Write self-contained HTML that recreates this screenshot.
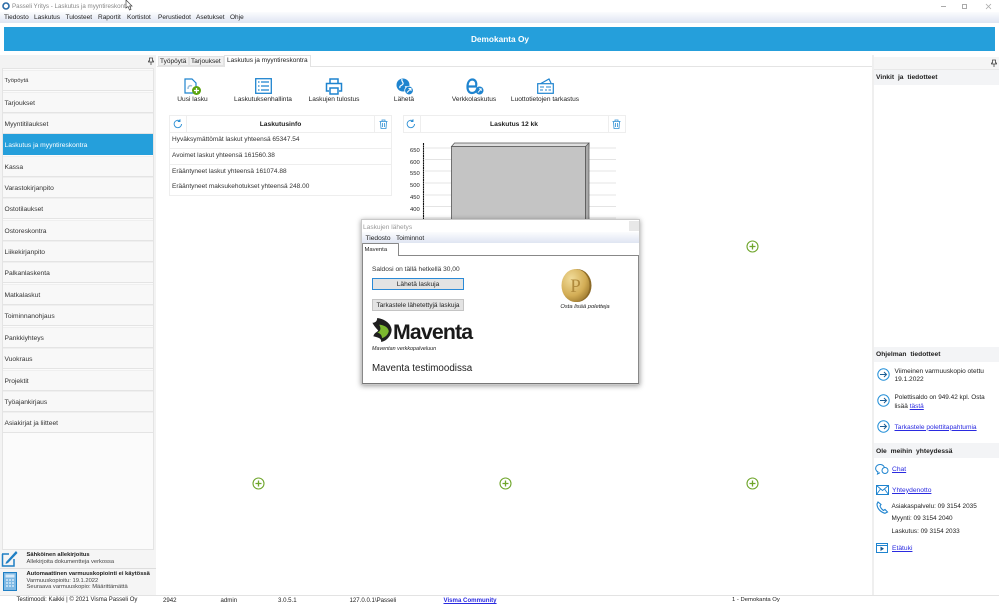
<!DOCTYPE html>
<html><head><meta charset="utf-8">
<style>
*{box-sizing:border-box}
html,body{margin:0;padding:0;width:999px;height:604px;overflow:hidden;background:#fff}
body{font-family:"Liberation Sans",sans-serif;font-size:6.6px;color:#222;position:relative}
#r{position:absolute;left:0;top:0;width:999px;height:604px;filter:blur(.35px)}
.a{position:absolute}
.t{position:absolute;white-space:nowrap;line-height:9px}
.c{transform:translateX(-50%)}
.n{position:absolute;left:3px;width:150px;height:21.300px;background:#f8f8f8;border-bottom:1px solid #e4e4e4;border-top:1px solid #efefef;line-height:21px;padding-left:1.500px;font-size:6.700px;color:#333}
a{color:#2a2ae0;text-decoration:underline}
svg{position:absolute;overflow:visible}
.b{font-weight:bold}
.row{position:absolute;left:169px;width:223px;height:16px;background:#fff;border:1px solid #eee;border-top:none;line-height:13px;padding-left:2px;font-size:6.500px;color:#333}
</style></head><body><div id="r">

<!-- title + menu -->
<svg style="left:2px;top:2px" width="8" height="8" viewBox="0 0 8 8"><circle cx="4" cy="4" r="3" fill="none" stroke="#2a6ca8" stroke-width="1.6"/></svg>
<div class="t" style="left:12px;top:1.500px;color:#888;font-size:6.200px">Passeli Yritys - Laskutus ja myyntireskontra</div>
<svg style="left:125px;top:0" width="8" height="11" viewBox="0 0 8 11"><path d="M1 0V8L3 6.500 4.500 10 6 9.300 4.600 6H7Z" fill="#fff" stroke="#444" stroke-width=".7"/></svg>
<div class="a" style="left:0;top:12px;width:999px;height:11px;background:linear-gradient(#fbfcfe,#dfe5f2)"></div>
<div class="t" style="left:4px;top:13px;font-size:6.500px">Tiedosto</div>
<div class="t" style="left:34px;top:13px;font-size:6.500px">Laskutus</div>
<div class="t" style="left:65.500px;top:13px;font-size:6.500px">Tulosteet</div>
<div class="t" style="left:98px;top:13px;font-size:6.500px">Raportit</div>
<div class="t" style="left:127px;top:13px;font-size:6.500px">Kortistot</div>
<div class="t" style="left:158px;top:13px;font-size:6.500px">Perustiedot</div>
<div class="t" style="left:196px;top:13px;font-size:6.500px">Asetukset</div>
<div class="t" style="left:230px;top:13px;font-size:6.500px">Ohje</div>
<div class="a" style="left:941px;top:5.500px;width:5px;height:1px;background:#aaa"></div>
<div class="a" style="left:962px;top:4px;width:5px;height:5px;border:1px solid #aaa"></div>
<svg style="left:985px;top:3px" width="7" height="7" viewBox="0 0 7 7"><path d="M1 1 6 6M6 1 1 6" stroke="#aaa" stroke-width=".8"/></svg>

<!-- banner -->
<div class="a" style="left:4px;top:27px;width:991px;height:24px;background:#259fdb"></div>
<div class="t c b" style="left:500px;top:34px;color:#fff;font-size:8.300px;line-height:10px">Demokanta Oy</div>

<!-- left panel -->
<div class="a" style="left:0;top:55px;width:156px;height:540px;background:#f3f3f3"></div>
<div class="a" style="left:2px;top:68px;width:152px;height:482px;background:#fbfbfb;border:1px solid #e4e4e4"></div>
<svg style="left:148px;top:57px" width="6" height="8" viewBox="0 0 6 8"><path d="M1.500 1H4.500V4H5.500V5H.5V4H1.500ZM3 5V8" fill="none" stroke="#444" stroke-width=".8"/></svg>
<div class="n" style="top:70px;font-size:5.900px">Työpöytä</div>
<div class="n" style="top:91.500px">Tarjoukset</div>
<div class="n" style="top:113px">Myyntitilaukset</div>
<div class="n" style="top:134px;background:#259fdb;border-color:#259fdb;color:#fff">Laskutus ja myyntireskontra</div>
<div class="n" style="top:155.500px">Kassa</div>
<div class="n" style="top:177px">Varastokirjanpito</div>
<div class="n" style="top:198px">Ostotilaukset</div>
<div class="n" style="top:219.500px">Ostoreskontra</div>
<div class="n" style="top:241px">Liikekirjanpito</div>
<div class="n" style="top:262px">Palkanlaskenta</div>
<div class="n" style="top:284px">Matkalaskut</div>
<div class="n" style="top:305px">Toiminnanohjaus</div>
<div class="n" style="top:326.500px">Pankkiyhteys</div>
<div class="n" style="top:348px">Vuokraus</div>
<div class="n" style="top:369.500px">Projektit</div>
<div class="n" style="top:391px">Työajankirjaus</div>
<div class="n" style="top:412px">Asiakirjat ja liitteet</div>

<!-- left bottom -->
<div class="a" style="left:0;top:550px;width:156px;height:19px;background:#f5f5f5;border-bottom:1px solid #ddd"></div>
<div class="a" style="left:0;top:569px;width:156px;height:26px;background:#f5f5f5"></div>
<svg style="left:1px;top:550px" width="17" height="17" viewBox="0 0 17 17"><path d="M1 4H8M1.500 4V16H13V9" fill="none" stroke="#1f7fc4" stroke-width="1.500"/><path d="M5 12 15 1 16.500 3 7 13 4.500 14Z" fill="#1f7fc4"/></svg>
<svg style="left:3px;top:572px" width="14" height="19" viewBox="0 0 14 19"><rect x=".5" y=".5" width="13" height="18" fill="#7fb9e4" stroke="#1f7fc4"/><rect x="2.500" y="2.500" width="9" height="3" fill="#d6eafa"/><path d="M3 8H11M3 11H11M3 14H11" stroke="#d6eafa" stroke-width="1.500" stroke-dasharray="2 1"/></svg>
<div class="t b" style="left:26.500px;top:550.500px;font-size:5.800px">Sähköinen allekirjoitus</div>
<div class="t" style="left:26.500px;top:557.500px;font-size:5.800px;color:#444">Allekirjoita dokumentteja verkossa</div>
<div class="t b" style="left:26.500px;top:570px;font-size:5.800px">Automaattinen varmuuskopiointi ei käytössä</div>
<div class="t" style="left:26.500px;top:577px;font-size:5.800px;color:#444">Varmuuskopioitu: 19.1.2022</div>
<div class="t" style="left:26.500px;top:583px;font-size:5.800px;color:#444">Seuraava varmuuskopio: Määrittämättä</div>

<!-- tabs -->
<div class="a" style="left:157px;top:66px;width:715px;height:1px;background:#e4e4e4"></div>
<div class="a" style="left:158px;top:56px;width:31px;height:10px;background:#f0f0f0;border:1px solid #e2e2e2"></div>
<div class="a" style="left:189px;top:56px;width:35px;height:10px;background:#f0f0f0;border:1px solid #e2e2e2"></div>
<div class="a" style="left:224px;top:55px;width:87px;height:12px;background:#fff;border:1px solid #e2e2e2;border-bottom:none"></div>
<div class="t" style="left:160px;top:57px;font-size:6.500px">Työpöytä</div>
<div class="t" style="left:191px;top:57px;font-size:6.500px">Tarjoukset</div>
<div class="t" style="left:227px;top:56px;font-size:6.500px">Laskutus ja myyntireskontra</div>

<!-- toolbar icons -->
<svg style="left:184px;top:78px" width="18" height="18" viewBox="0 0 18 18"><path d="M1 1H8L12 5V15H1Z" fill="#fff" stroke="#1f84cf" stroke-width="1.200"/><path d="M4 11C4 8 6 7 8 8" fill="none" stroke="#9bbfdc" stroke-width="1.500"/><circle cx="12.500" cy="12.500" r="4.500" fill="#5ba40f"/><path d="M10 12.500H15M12.500 10V15" stroke="#fff" stroke-width="1.300"/></svg>
<svg style="left:255px;top:78px" width="17" height="16" viewBox="0 0 17 16"><rect x=".7" y=".7" width="15.600" height="14.600" fill="#fff" stroke="#1f84cf" stroke-width="1.300"/><path d="M3 4H4.500M6 4H14M3 8H4.500M6 8H14M3 12H4.500M6 12H14" stroke="#1f84cf" stroke-width="1.300"/></svg>
<svg style="left:325px;top:78px" width="18" height="17" viewBox="0 0 18 17"><path d="M5 5V1H13V5M4 13H1.500V5.500H16.500V13H14" fill="none" stroke="#1f84cf" stroke-width="1.500"/><path d="M5 10H13V16H5Z" fill="#fff" stroke="#1f84cf" stroke-width="1.500"/></svg>
<svg style="left:396px;top:78px" width="18" height="17" viewBox="0 0 18 17"><circle cx="7" cy="7" r="6.500" fill="#1f84cf"/><path d="M6 1C5 4 8 4 7 6S3 7 4 10M9 9C11 8 12 10 11 12" stroke="#fff" stroke-width="1.200" fill="none"/><circle cx="13" cy="12.500" r="4.300" fill="#1f84cf" stroke="#fff" stroke-width=".7"/><path d="M11 14.500 15 10.500M12.500 10.500H15V13" stroke="#fff" stroke-width="1" fill="none"/></svg>
<svg style="left:466px;top:78px" width="18" height="17" viewBox="0 0 18 17"><path d="M2 8.500H10C11 4 9 1.500 6.500 1.500 3 1.500 1.500 5 1.500 9 1.500 13 3.500 15 6 15 8 15 9.500 14 10.500 12.500" fill="none" stroke="#1f84cf" stroke-width="2.200"/><circle cx="13.500" cy="12.500" r="4" fill="#1f84cf"/><path d="M12 14.500 15 11M13 10.800H15.200V13" stroke="#fff" stroke-width=".9" fill="none"/></svg>
<svg style="left:537px;top:78px" width="17" height="16" viewBox="0 0 17 16"><path d="M3 6 12 1 14 5" fill="none" stroke="#1f84cf" stroke-width="1.200"/><rect x=".7" y="5.700" width="15.600" height="9.600" fill="#fff" stroke="#1f84cf" stroke-width="1.200"/><path d="M3 9H7M9 9H14M3 12H6M8 12H10M11.500 12H14" stroke="#1f84cf" stroke-width="1"/></svg>
<div class="t c" style="left:192.500px;top:95px;font-size:6.600px">Uusi lasku</div>
<div class="t c" style="left:263px;top:95px;font-size:6.600px">Laskutuksenhallinta</div>
<div class="t c" style="left:334px;top:95px;font-size:6.600px">Laskujen tulostus</div>
<div class="t c" style="left:404px;top:95px;font-size:6.600px">Lähetä</div>
<div class="t c" style="left:474px;top:95px;font-size:6.600px">Verkkolaskutus</div>
<div class="t c" style="left:545px;top:95px;font-size:6.600px">Luottotietojen tarkastus</div>

<!-- Laskutusinfo widget -->
<div class="a" style="left:169px;top:115px;width:223px;height:18px;border:1px solid #eee;background:#fff"></div>
<div class="a" style="left:186px;top:115px;width:1px;height:18px;background:#eee"></div>
<div class="a" style="left:374px;top:115px;width:1px;height:18px;background:#eee"></div>
<svg style="left:173px;top:119px" width="10" height="10" viewBox="0 0 10 10"><path d="M8.500 5A3.700 3.700 0 1 1 7 2M7 .3V2.500H4.800" fill="none" stroke="#2c8fd4" stroke-width=".9"/></svg>
<svg style="left:379px;top:119px" width="9" height="10" viewBox="0 0 9 10"><path d="M.5 2.500H8.500M3 2.500V1H6V2.500M1.500 2.500 2 9.500H7L7.500 2.500M3.500 4V8M5.500 4V8" fill="none" stroke="#2c8fd4" stroke-width=".8"/></svg>
<div class="t c b" style="left:280.500px;top:119.500px;font-size:6.700px">Laskutusinfo</div>
<div class="row" style="top:133px">Hyväksymättömät laskut yhteensä 65347.54</div>
<div class="row" style="top:149px">Avoimet laskut yhteensä 161560.38</div>
<div class="row" style="top:165px">Erääntyneet laskut yhteensä 161074.88</div>
<div class="row" style="top:180px">Erääntyneet maksukehotukset yhteensä 248.00</div>

<!-- chart widget -->
<div class="a" style="left:403px;top:115px;width:223px;height:18px;border:1px solid #eee;background:#fff"></div>
<div class="a" style="left:420px;top:115px;width:1px;height:18px;background:#eee"></div>
<div class="a" style="left:608px;top:115px;width:1px;height:18px;background:#eee"></div>
<svg style="left:406px;top:119px" width="10" height="10" viewBox="0 0 10 10"><path d="M8.500 5A3.700 3.700 0 1 1 7 2M7 .3V2.500H4.800" fill="none" stroke="#2c8fd4" stroke-width=".9"/></svg>
<svg style="left:612px;top:119px" width="9" height="10" viewBox="0 0 9 10"><path d="M.5 2.500H8.500M3 2.500V1H6V2.500M1.500 2.500 2 9.500H7L7.500 2.500M3.500 4V8M5.500 4V8" fill="none" stroke="#2c8fd4" stroke-width=".8"/></svg>
<div class="t c b" style="left:514px;top:119.500px;font-size:6.700px">Laskutus 12 kk</div>

<svg style="left:405px;top:140px" width="215" height="82" viewBox="0 0 215 82">
<path d="M20 8H211M20 19.500H211M20 31H211M20 43H211M20 55H211M20 66.500H211M20 78H211" stroke="#e4e4e4" stroke-width="1"/>
<path d="M18.500 3V82" stroke="#111" stroke-width="1.100" stroke-dasharray="2 .4"/>
<path d="M46.500 6.500 49.500 3H184V6.500L181 7Z" fill="#dedede" stroke="#555" stroke-width=".7"/>
<path d="M180.500 6.500 184 3V82H180.500Z" fill="#a9a9a9" stroke="#555" stroke-width=".7"/>
<rect x="46.500" y="6.500" width="134" height="76" fill="#c4c4c4" stroke="#555" stroke-width=".8"/>
</svg>
<div class="t" style="left:410px;top:147px;font-size:5.800px">650</div>
<div class="t" style="left:410px;top:158.500px;font-size:5.800px">600</div>
<div class="t" style="left:410px;top:170px;font-size:5.800px">550</div>
<div class="t" style="left:410px;top:182px;font-size:5.800px">500</div>
<div class="t" style="left:410px;top:193.500px;font-size:5.800px">450</div>
<div class="t" style="left:410px;top:205.500px;font-size:5.800px">400</div>

<!-- plus buttons -->
<svg style="left:746px;top:240px" width="13" height="13" viewBox="0 0 13 13"><circle cx="6.500" cy="6.500" r="5.500" fill="#fff" stroke="#6ea52a" stroke-width="1.100"/><path d="M3.500 6.500H9.500M6.500 3.500V9.500" stroke="#6ea52a" stroke-width="1.300"/></svg>
<svg style="left:252px;top:477px" width="13" height="13" viewBox="0 0 13 13"><circle cx="6.500" cy="6.500" r="5.500" fill="#fff" stroke="#6ea52a" stroke-width="1.100"/><path d="M3.500 6.500H9.500M6.500 3.500V9.500" stroke="#6ea52a" stroke-width="1.300"/></svg>
<svg style="left:499px;top:477px" width="13" height="13" viewBox="0 0 13 13"><circle cx="6.500" cy="6.500" r="5.500" fill="#fff" stroke="#6ea52a" stroke-width="1.100"/><path d="M3.500 6.500H9.500M6.500 3.500V9.500" stroke="#6ea52a" stroke-width="1.300"/></svg>
<svg style="left:746px;top:477px" width="13" height="13" viewBox="0 0 13 13"><circle cx="6.500" cy="6.500" r="5.500" fill="#fff" stroke="#6ea52a" stroke-width="1.100"/><path d="M3.500 6.500H9.500M6.500 3.500V9.500" stroke="#6ea52a" stroke-width="1.300"/></svg>

<!-- right panel -->
<div class="a" style="left:872px;top:55px;width:127px;height:540px;background:#fff;border-left:2px solid #efefef"></div>
<div class="a" style="left:874px;top:57px;width:125px;height:12px;background:#f5f5f5"></div>
<svg style="left:991px;top:59px" width="6" height="8" viewBox="0 0 6 8"><path d="M1.500 1H4.500V4H5.500V5H.5V4H1.500ZM3 5V8" fill="none" stroke="#444" stroke-width=".8"/></svg>
<div class="a" style="left:874px;top:69px;width:125px;height:16px;background:#f3f4f6;border-top:1px solid #e8e8e8"></div>
<div class="t b" style="left:876px;top:72.500px;font-size:6.700px;word-spacing:2px">Vinkit ja tiedotteet</div>

<div class="a" style="left:874px;top:347px;width:125px;height:15px;background:#f3f4f6"></div>
<div class="t b" style="left:876px;top:349.500px;font-size:6.700px;word-spacing:2px">Ohjelman tiedotteet</div>
<svg style="left:877px;top:368px" width="13" height="13" viewBox="0 0 13 13"><circle cx="6.500" cy="6.500" r="5.700" fill="#fff" stroke="#2590d8" stroke-width="1"/><path d="M3 6.500H9.500M7 4 9.500 6.500 7 9" fill="none" stroke="#1c5f96" stroke-width="1"/></svg>
<div class="t" style="left:894.500px;top:367px;font-size:6.550px">Viimeinen varmuuskopio otettu</div>
<div class="t" style="left:894.500px;top:374.500px;font-size:6.550px">19.1.2022</div>
<svg style="left:877px;top:394px" width="13" height="13" viewBox="0 0 13 13"><circle cx="6.500" cy="6.500" r="5.700" fill="#fff" stroke="#2590d8" stroke-width="1"/><path d="M3 6.500H9.500M7 4 9.500 6.500 7 9" fill="none" stroke="#1c5f96" stroke-width="1"/></svg>
<div class="t" style="left:894.500px;top:392.500px;font-size:6.400px">Polettisaldo on 949.42 kpl. Osta</div>
<div class="t" style="left:894.500px;top:401.500px;font-size:6.500px">lisää <a>tästä</a></div>
<svg style="left:877px;top:420px" width="13" height="13" viewBox="0 0 13 13"><circle cx="6.500" cy="6.500" r="5.700" fill="#fff" stroke="#2590d8" stroke-width="1"/><path d="M3 6.500H9.500M7 4 9.500 6.500 7 9" fill="none" stroke="#1c5f96" stroke-width="1"/></svg>
<div class="t" style="left:894.500px;top:422.500px;font-size:6.600px"><a>Tarkastele polettitapahtumia</a></div>

<div class="a" style="left:874px;top:443px;width:125px;height:15px;background:#f3f4f6"></div>
<div class="t b" style="left:876px;top:446.500px;font-size:6.700px;word-spacing:2px">Ole meihin yhteydessä</div>
<svg style="left:875px;top:463px" width="14" height="12" viewBox="0 0 14 12"><path d="M9 7.500A4.500 4 0 1 0 3 9L2.500 11 5 9.700" fill="#fff" stroke="#1f84cf" stroke-width="1"/><circle cx="10" cy="7.500" r="3" fill="#fff" stroke="#1f84cf" stroke-width="1"/></svg>
<div class="t" style="left:892px;top:464.500px;font-size:6.700px"><a>Chat</a></div>
<svg style="left:876px;top:485px" width="13" height="10" viewBox="0 0 13 10"><rect x=".5" y=".5" width="12" height="9" fill="#fff" stroke="#1f84cf"/><path d="M.5 .5 6.500 5.500 12.500 .5M.5 9.500 4.500 4M12.500 9.500 8.500 4" fill="none" stroke="#1f84cf" stroke-width=".9"/></svg>
<div class="t" style="left:892px;top:485.500px;font-size:6.700px"><a>Yhteydenotto</a></div>
<svg style="left:876px;top:501px" width="12" height="13" viewBox="0 0 12 13"><path d="M2 1 1 3C1 7 4 11 9 12.300L11.500 11 9 8.500 7.500 9.500C6 8.500 4.500 6.500 4 5L5 3.500Z" fill="#fff" stroke="#1f84cf" stroke-width="1.100"/></svg>
<div class="t" style="left:891.500px;top:501.500px;font-size:6.400px">Asiakaspalvelu: 09 3154 2035</div>
<div class="t" style="left:891.500px;top:514px;font-size:6.400px">Myynti: 09 3154 2040</div>
<div class="t" style="left:891.500px;top:526.500px;font-size:6.400px">Laskutus: 09 3154 2033</div>
<svg style="left:876px;top:543px" width="12" height="10" viewBox="0 0 12 10"><rect x=".5" y=".5" width="11" height="9" fill="#fff" stroke="#1f84cf"/><path d="M.5 2.500H11.500" stroke="#1f84cf"/><path d="M4.500 3.500 8 5.800 4.500 8Z" fill="#1a5a90"/></svg>
<div class="t" style="left:892px;top:543.500px;font-size:6.700px"><a>Etätuki</a></div>

<!-- status bar -->
<div class="a" style="left:0;top:595px;width:999px;height:1px;background:#e3e3e3"></div>
<div class="t" style="left:16.500px;top:596px;font-size:6px">Testimoodi: Kaikki | © 2021 Visma Passeli Oy</div>
<div class="t" style="left:163px;top:596px;font-size:6.100px">2942</div>
<div class="t" style="left:220.500px;top:596px;font-size:6.100px">admin</div>
<div class="t" style="left:278px;top:596px;font-size:6.100px">3.0.5.1</div>
<div class="t" style="left:349.500px;top:596px;font-size:6.100px">127.0.0.1\Passeli</div>
<div class="t b" style="left:443.500px;top:596px;font-size:6.100px"><a>Visma Community</a></div>
<div class="t" style="left:732px;top:596px;font-size:5.900px">1 - Demokanta Oy</div>

<!-- dialog -->
<div class="a" style="left:361px;top:219px;width:279px;height:166px;background:#fff;border:1px solid #c9c9c9;box-shadow:0 1px 5px rgba(0,0,0,.4)"></div>
<div class="t" style="left:363px;top:222.500px;color:#999;font-size:6.600px">Laskujen lähetys</div>
<div class="a" style="left:629px;top:221px;width:10px;height:10px;background:#e8e8e8"></div>
<div class="a" style="left:362px;top:232px;width:277px;height:11px;background:linear-gradient(#fbfcfe,#dfe5f2)"></div>
<div class="t" style="left:365.500px;top:234px;font-size:6.600px">Tiedosto</div>
<div class="t" style="left:396px;top:234px;font-size:6.600px">Toiminnot</div>
<div class="a" style="left:362px;top:255px;width:277px;height:129px;background:#fff;border:1px solid #888;border-bottom:1px solid #777"></div>
<div class="a" style="left:362px;top:243px;width:37px;height:13px;background:#fff;border:1px solid #888;border-bottom:none;border-radius:1px 1px 0 0"></div>
<div class="t" style="left:364.500px;top:246px;font-size:5.900px">Maventa</div>
<div class="t" style="left:372px;top:265px;font-size:6.600px;color:#333">Saldosi on tällä hetkellä 30,00</div>
<div class="a" style="left:372px;top:278px;width:92px;height:12px;background:#e3e3e3;border:1px solid #2b8ad6"></div>
<div class="t c" style="left:418px;top:280px;font-size:6.600px">Lähetä laskuja</div>
<div class="a" style="left:372px;top:299px;width:92px;height:12px;background:#e3e3e3;border:1px solid #c4c4c4"></div>
<div class="t c" style="left:418px;top:301px;font-size:6.500px">Tarkastele lähetettyjä laskuja</div>
<svg style="left:372px;top:317px" width="21" height="25" viewBox="0 0 21 26"><path d="M5 1C12 2 19 6 20 13 20 19 15 25 9 26 10 22 5 21 1 20 2 16 5 16 6 14 3 11 1 8 0 6 2 6 5 5 5 1Z" fill="#1f1f1f"/><path d="M7 8C12 8 17 11 17 15 16 19 13 21 10 22 10 19 8 17 5 16 9 15 9 11 7 8Z" fill="#7cb82f"/></svg>
<div class="t" style="left:393px;top:320.500px;font-size:21.300px;line-height:22px;color:#1a1a1a;font-weight:bold;letter-spacing:-.85px">Maventa</div>
<div class="t" style="left:372px;top:345px;font-size:5.400px;font-style:italic">Maventan verkkopalveluun</div>
<div class="t" style="left:372px;top:362.500px;font-size:9.800px;line-height:12px;color:#222">Maventa testimoodissa</div>
<svg style="left:560px;top:268px" width="32" height="35" viewBox="0 0 32 35"><defs><radialGradient id="g" cx=".35" cy=".3" r=".85"><stop offset="0" stop-color="#f1dc9a"/><stop offset=".6" stop-color="#d3ad55"/><stop offset="1" stop-color="#8f6c25"/></radialGradient></defs><ellipse cx="17" cy="17.500" rx="14.500" ry="16.500" fill="#8c6a27"/><ellipse cx="15.500" cy="17.500" rx="14" ry="16.500" fill="url(#g)"/><text x="15.500" y="24" font-family="Liberation Serif,serif" font-size="19" fill="#b08a3c" text-anchor="middle">P</text></svg>
<div class="t c" style="left:585px;top:302.500px;font-size:5.800px;font-style:italic">Osta lisää poletteja</div>

</div></body></html>
